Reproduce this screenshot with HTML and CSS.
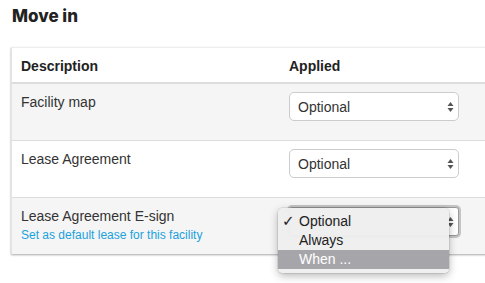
FILE: index.html
```html
<!DOCTYPE html>
<html lang="en">
<head>
  <meta charset="UTF-8" />
  <title>Move in</title>
  <link rel="stylesheet" href="styles.css">
</head>
<body>
  <div class="page">
    <h2 class="title">Move in</h2>

    <div class="card">
      <div class="row head">
        <div class="cell">Description</div>
        <div class="cell">Applied</div>
      </div>

      <div class="row shade">
        <div class="cell">Facility map</div>
        <div class="cell">
          <div class="select">
            <span>Optional</span>
            <svg class="arrows" width="7" height="12" viewBox="0 0 7 12"><path d="M3.5 1 L6.5 5 L0.5 5 Z M3.5 11 L6.5 7 L0.5 7 Z" fill="#555"/></svg>
          </div>
        </div>
      </div>

      <div class="row">
        <div class="cell">Lease Agreement</div>
        <div class="cell">
          <div class="select">
            <span>Optional</span>
            <svg class="arrows" width="7" height="12" viewBox="0 0 7 12"><path d="M3.5 1 L6.5 5 L0.5 5 Z M3.5 11 L6.5 7 L0.5 7 Z" fill="#555"/></svg>
          </div>
        </div>
      </div>

      <div class="row shade">
        <div class="cell">
          Lease Agreement E-sign
          <a class="link" href="#">Set as default lease for this facility</a>
        </div>
        <div class="cell">
          <div class="select focus">
            <span>Optional</span>
            <svg class="arrows" width="7" height="12" viewBox="0 0 7 12"><path d="M3.5 1 L6.5 5 L0.5 5 Z M3.5 11 L6.5 7 L0.5 7 Z" fill="#555"/></svg>
          </div>
          <ul class="menu">
            <li class="checked">Optional</li>
            <li>Always</li>
            <li class="hover">When ...</li>
          </ul>
        </div>
      </div>
    </div>
  </div>
</body>
</html>
```

FILE: styles.css
```css
* { box-sizing: border-box; }
body {
  margin: 0;
  background: #fff;
  color: #333;
  font-family: 'Liberation Sans', Arial, sans-serif;
  font-size: 14px;
}
.page {
  height: 283px;
  padding: 5px 0 0 11px;
  overflow: hidden;
}
.title {
  margin: 0 0 20px 1px;
  font-family: Inter, 'DejaVu Sans', sans-serif;
  font-weight: 800;
  font-size: 17px;
  line-height: 22px;
  color: #222;
}
.card {
  width: calc(100% + 20px);
  background: #fff;
  border-top: 1px solid #eee;
  border-left: 1px solid #e3e3e3;
  box-shadow: 0 1px 2px rgba(0,0,0,0.35);
}
.row {
  display: grid;
  grid-template-columns: 268px 1fr;
  height: 57px;
  border-bottom: 1px solid #ddd;
}
.row:last-child { border-bottom: none; height: 56px; }
.row.head {
  height: 36px;
  border-bottom: 2px solid #ddd;
  font-weight: 700;
  color: #222;
}
.row.shade { background: #f5f5f5; }
.cell {
  padding: 9px 9px 0;
  line-height: 18px;
  position: relative;
}
.link {
  display: block;
  margin-top: 3px;
  font-size: 12px;
  line-height: 14px;
  color: #1ba1dd;
  text-decoration: none;
}
.select {
  width: 170px;
  height: 29px;
  margin-top: -1px;
  background: #fff;
  border: 1px solid #ccc;
  border-radius: 5px;
  display: flex;
  align-items: center;
  justify-content: space-between;
  padding: 0 4px 0 8px;
  color: #333;
}
.select.focus {
  margin-top: 0;
  border-color: #999;
  border-radius: 3px;
  box-shadow: 0 0 0 2px #c4c4c4;
}
.arrows { display: block; }
.menu {
  position: absolute;
  left: -2px;
  top: 10px;
  width: 171px;
  margin: 0;
  padding: 4px 0;
  list-style: none;
  background: rgba(238,238,238,0.97);
  border-radius: 5px;
  box-shadow: 0 0 0 1px rgba(0,0,0,0.08), 0 3px 8px rgba(0,0,0,0.28);
  color: #222;
}
.menu li {
  height: 19px;
  line-height: 19px;
  padding-left: 21px;
  position: relative;
}
.menu li.checked::before {
  content: '\2713';
  position: absolute;
  left: 4px;
  top: 0;
  font-family: 'DejaVu Sans', sans-serif;
  font-size: 15px;
}
.menu li.hover {
  background: #a6a6aa;
  color: #fff;
}
```
